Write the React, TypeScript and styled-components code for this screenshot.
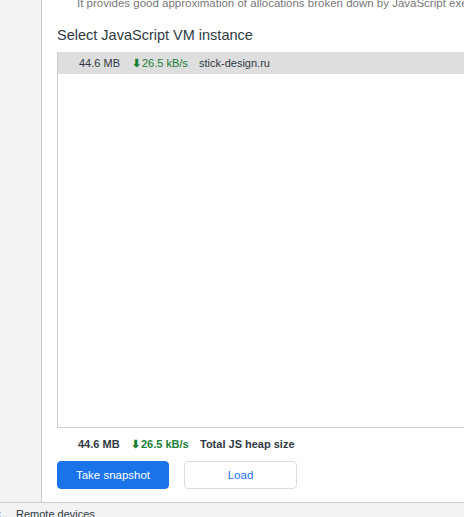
import React from "react";
import styled, { createGlobalStyle } from "styled-components";

const GlobalStyle = createGlobalStyle`
  html, body {
    margin: 0;
    padding: 0;
  }
  body {
    font-family: "Liberation Sans", Arial, sans-serif;
    color: #303942;
  }
  #root {
    height: 517px;
    overflow: hidden;
  }
`;

const Page = styled.div`
  height: 517px;
  display: flex;
  flex-direction: column;
  overflow: hidden;
`;

const Workspace = styled.div`
  flex: 1;
  display: flex;
  min-height: 0;
`;

const Sidebar = styled.div`
  width: 41px;
  flex-shrink: 0;
  background: #f3f3f3;
  border-right: 1px solid #cdcdcd;
`;

const Main = styled.div`
  flex: 1;
  min-width: 0;
  display: flex;
  flex-direction: column;
  padding-left: 15px;
  background: #fff;
  overflow: hidden;
`;

// the panel is scrolled a little, so the top line is cut off
const Description = styled.p`
  margin: -4px 0 0 20px;
  font-size: 11.5px;
  line-height: 14px;
  color: #777;
  white-space: nowrap;
`;

const Heading = styled.h2`
  margin: 16px 0 0;
  font-size: 14.5px;
  font-weight: normal;
  line-height: 18px;
  color: #303942;
  white-space: nowrap;
`;

const ListBox = styled.div`
  margin-top: 8px;
  height: 375px;
  margin-right: -20px;
  border: 1px solid #cdcdcd;
  border-top: none;
  display: flex;
  flex-direction: column;
`;

const ListRow = styled.div<{ selected?: boolean }>`
  height: 22px;
  display: flex;
  align-items: center;
  padding-left: 21px;
  background: ${({ selected }) => (selected ? "#dedede" : "transparent")};
  font-size: 11px;
  white-space: nowrap;
`;

const Size = styled.span<{ bold?: boolean }>`
  width: 53px;
  font-weight: ${({ bold }) => (bold ? "bold" : "normal")};
  color: #303942;
`;

const Rate = styled.span<{ bold?: boolean; wide?: boolean }>`
  width: ${({ wide }) => (wide ? "69px" : "67px")};
  color: #188038;
  font-weight: ${({ bold }) => (bold ? "bold" : "normal")};
`;

const Arrow = styled.span`
  display: inline-block;
  font-size: 11px;
  font-weight: bold;
  margin-right: 1px;
`;

const Label = styled.span<{ bold?: boolean }>`
  font-weight: ${({ bold }) => (bold ? "bold" : "normal")};
  color: #303942;
`;

const Footer = styled.div`
  margin-top: 9px;
  padding-left: 21px;
  height: 14px;
  display: flex;
  align-items: center;
  font-size: 11px;
  white-space: nowrap;
`;

const Buttons = styled.div`
  display: flex;
  gap: 15px;
  margin-top: 10px;
`;

const Button = styled.button<{ primary?: boolean }>`
  width: ${({ primary }) => (primary ? "112px" : "113px")};
  height: 28px;
  border-radius: 4px;
  font-family: "Liberation Sans", Arial, sans-serif;
  font-size: 11.5px;
  cursor: pointer;
  border: 1px solid ${({ primary }) => (primary ? "#1a73e8" : "#dadce0")};
  background: ${({ primary }) => (primary ? "#1a73e8" : "#fff")};
  color: ${({ primary }) => (primary ? "#fff" : "#1a73e8")};
`;

const Drawer = styled.div`
  height: 14px;
  flex-shrink: 0;
  border-top: 1px solid #cdcdcd;
  background: #f3f3f3;
  display: flex;
  align-items: flex-start;
  overflow: hidden;
  font-size: 11px;
  white-space: nowrap;
`;

const CloseTail = styled.span`
  margin-left: -5px;
  width: 21px;
  color: #888;
  line-height: 23px;
`;

const Tab = styled.span`
  color: #303942;
  line-height: 23px;
`;

const App: React.FC = () => {
  return (
    <>
      <GlobalStyle />
      <Page>
        <Workspace>
          <Sidebar />
          <Main>
            <Description>
              It provides good approximation of allocations broken down by JavaScript execution stack.
            </Description>
            <Heading>Select JavaScript VM instance</Heading>
            <ListBox>
              <ListRow selected>
                <Size>44.6 MB</Size>
                <Rate>
                  <Arrow>⬇</Arrow>26.5 kB/s
                </Rate>
                <Label>stick-design.ru</Label>
              </ListRow>
            </ListBox>
            <Footer>
              <Size bold>44.6 MB</Size>
              <Rate bold wide>
                <Arrow>⬇</Arrow>26.5 kB/s
              </Rate>
              <Label bold>Total JS heap size</Label>
            </Footer>
            <Buttons>
              <Button primary>Take snapshot</Button>
              <Button>Load</Button>
            </Buttons>
          </Main>
        </Workspace>
        <Drawer>
          <CloseTail>×</CloseTail>
          <Tab>Remote devices</Tab>
        </Drawer>
      </Page>
    </>
  );
};

export default App;
